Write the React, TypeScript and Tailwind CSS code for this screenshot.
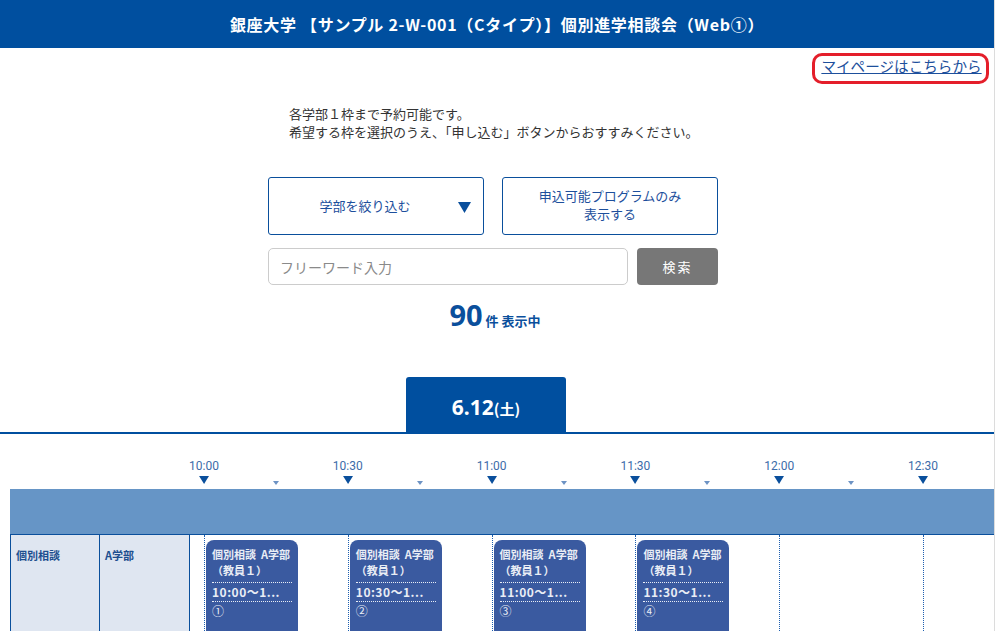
import React from 'react';

const JP = { fontFamily: '"Noto Sans CJK JP", "Noto Sans", sans-serif' };

// 30分 = 143.8px、10:00 は時間軸の左端から 14px
const SLOT = 143.8;
const ORIGIN = 14;

const times = ['10:00', '10:30', '11:00', '11:30', '12:00', '12:30'];

const slots = [
  { time: '10:00〜1...', no: '①', idx: 0 },
  { time: '10:30〜1...', no: '②', idx: 1 },
  { time: '11:00〜1...', no: '③', idx: 2 },
  { time: '11:30〜1...', no: '④', idx: 3 },
];

function Caret({ size }: { size: 'lg' | 'sm' }) {
  if (size === 'lg') {
    return (
      <svg width="10" height="8" viewBox="0 0 10 8">
        <path d="M0 0 L10 0 L5 8 Z" fill="#0a4f9c" />
      </svg>
    );
  }
  return (
    <svg width="6" height="4" viewBox="0 0 6 4">
      <path d="M0 0 L6 0 L3 4 Z" fill="#6d93c4" />
    </svg>
  );
}

function SlotCard({ time, no }: { time: string; no: string }) {
  return (
    <div className="w-[92px] h-[100px] rounded-t-[8px] bg-[#3a5aa0] px-[6px] pt-[6px] text-[#e9edf5]" style={JP}>
      <div className="text-[11px] font-bold leading-[16px] whitespace-nowrap">個別相談&nbsp;&nbsp;A学部</div>
      <div className="text-[11px] font-bold leading-[16px] pb-[4px] whitespace-nowrap">（教員１）</div>
      <div className="border-t border-dotted border-[#e9edf5]" />
      <div className="text-[12px] font-bold leading-[18px] tracking-[0.5px] whitespace-nowrap">{time}</div>
      <div className="border-t border-dotted border-[#e9edf5]" />
      <div className="text-[12px] leading-[18px]">{no}</div>
    </div>
  );
}

export default function App() {
  return (
    <div className="w-[995px] h-[631px] overflow-hidden bg-white border-r border-[#dcdcdc]" style={JP}>
      {/* Header */}
      <div className="h-[48px] bg-[#004f9f] flex items-center justify-center">
        <h1 className="text-white text-[16px] font-bold tracking-[0.7px]">
          銀座大学 【サンプル 2-W-001（Cタイプ）】個別進学相談会（Web①）
        </h1>
      </div>

      {/* My page link */}
      <div className="flex justify-end pt-[5px] pr-[5px]">
        <div className="h-[31px] w-[177px] rounded-[10px] border-[3px] border-[#e41e2a] flex items-center justify-center pb-[4px] pl-[2px]">
          <a href="#" className="text-[14.6px] text-[#1d4f9c] underline leading-none">
            マイページはこちらから
          </a>
        </div>
      </div>

      {/* Search area */}
      <div className="w-[450px] ml-[268px]">
        <p className="mt-[21px] pl-[21px] text-[13px] leading-[18px] text-[#333333]">
          各学部１枠まで予約可能です。
          <br />
          希望する枠を選択のうえ、「申し込む」ボタンからおすすみください。
        </p>

        <div className="mt-[36px] grid grid-cols-2 gap-[18px]">
          <button className="h-[58px] rounded-[3px] border border-[#0a4f9c] bg-white relative flex items-center justify-center pr-[22px] text-[13px] text-[#1d4f9c]">
            学部を絞り込む
            <span className="absolute right-[12px] top-[24px]">
              <svg width="13" height="11" viewBox="0 0 13 11">
                <path d="M0 0 L13 0 L6.5 11 Z" fill="#0a4f9c" />
              </svg>
            </span>
          </button>
          <button className="h-[58px] rounded-[3px] border border-[#0a4f9c] bg-white flex flex-col items-center justify-center text-[13px] leading-[18px] text-[#1d4f9c] pb-[2px]">
            <span>申込可能プログラムのみ</span>
            <span>表示する</span>
          </button>
        </div>

        <div className="mt-[13px] flex gap-[9px]">
          <input
            placeholder="フリーワード入力"
            className="h-[37px] w-[360px] rounded-[5px] border border-[#cccccc] px-[11px] text-[14px] placeholder:text-[#8a8a8a] outline-none"
            style={JP}
          />
          <button className="h-[37px] w-[81px] rounded-[4px] bg-[#777777] text-white text-[13px] tracking-[2px]">
            検索
          </button>
        </div>

        <div className="mt-[12px] h-[36px] flex items-end justify-center text-[#0a4f9c] pl-[4px]">
          <span className="text-[29px] font-bold leading-[36px]" style={{ fontFamily: '"Noto Sans", sans-serif' }}>90</span>
          <span className="text-[13px] font-bold leading-none mb-[6px] ml-[3px]">件 表示中</span>
        </div>

        <div className="mt-[44px] flex justify-center pr-[14px]">
          <div className="w-[160px] h-[55px] rounded-t-[3px] bg-[#004f9f] flex items-center justify-center text-white pt-[6px]">
            <span className="text-[21px] font-bold" style={{ fontFamily: '"Noto Sans", sans-serif' }}>6.12</span>
            <span className="text-[15px] font-bold mt-[3px]">(土)</span>
          </div>
        </div>
      </div>
      <div className="h-[2px] bg-[#004f9f]" />

      {/* Timeline */}
      <div className="pl-[10px]">
        {/* Time axis */}
        <div className="relative h-[55px] ml-[180px]">
          {times.map((t, i) => (
            <div
              key={t}
              className="absolute top-[24px] -translate-x-1/2 flex flex-col items-center"
              style={{ left: ORIGIN + SLOT * i }}
            >
              <span className="text-[12px] leading-[16px] text-[#3d6ca9]" style={{ fontFamily: 'Roboto, sans-serif' }}>{t}</span>
              <span className="mt-[2px] block leading-none">
                <Caret size="lg" />
              </span>
            </div>
          ))}
          {times.slice(0, 5).map((t, i) => (
            <div
              key={'h' + t}
              className="absolute top-[47px] -translate-x-1/2 leading-none"
              style={{ left: ORIGIN + SLOT * i + SLOT / 2 }}
            >
              <Caret size="sm" />
            </div>
          ))}
        </div>

        {/* Band */}
        <div className="h-[46px] bg-[#6695c6] border-b border-[#0a4f9c]" />

        {/* Row */}
        <div className="flex h-[110px]">
          <div className="w-[90px] bg-[#dfe6f1] border-l border-r border-[#0a4f9c] pl-[5px] pt-[12px] text-[11px] font-bold text-[#1d4f8f]">
            個別相談
          </div>
          <div className="w-[90px] bg-[#dfe6f1] border-r border-[#0a4f9c] pl-[5px] pt-[12px] text-[11px] font-bold text-[#1d4f8f]">
            A学部
          </div>
          <div className="relative flex-1">
            {times.map((t, i) => (
              <div
                key={'l' + t}
                className="absolute top-0 bottom-0 border-l border-dotted border-[#1d5fb0]"
                style={{ left: ORIGIN + SLOT * i }}
              />
            ))}
            {slots.map((s) => (
              <div key={s.no} className="absolute top-[5px]" style={{ left: ORIGIN + SLOT * s.idx + 2 }}>
                <SlotCard time={s.time} no={s.no} />
              </div>
            ))}
          </div>
        </div>
      </div>
    </div>
  );
}
